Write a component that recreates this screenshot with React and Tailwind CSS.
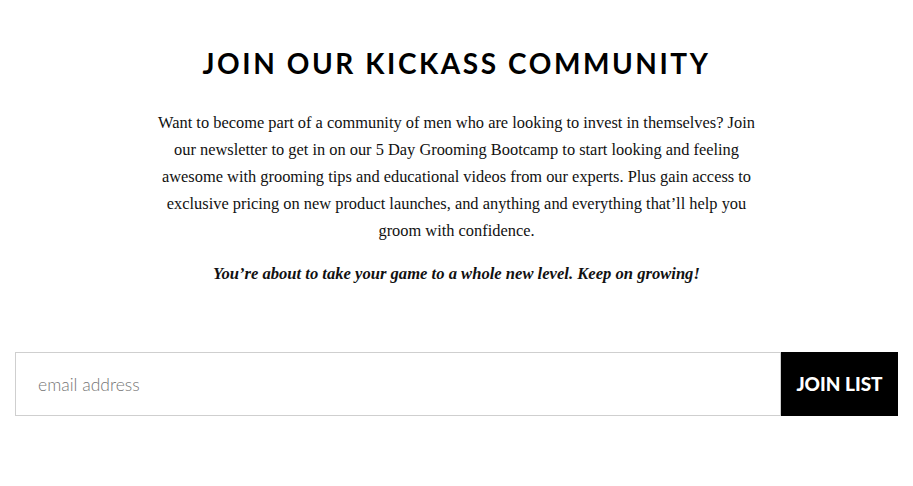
import React from 'react';

export default function App() {
  return (
    <div className="min-h-[486px] w-full bg-white px-[15px] pt-[44px]">
      <h2 className="text-center font-['Lato','Noto_Sans',sans-serif] text-[28px] leading-[38px] font-bold uppercase tracking-[0.092em] text-black">
        Join our kickass community
      </h2>

      <div className="mx-auto mt-[27px] max-w-[640px] text-center font-['Liberation_Serif',serif] text-[16.4px] leading-[27px] text-[#111]">
        <p>
          Want to become part of a community of men who are looking to invest in themselves? Join
          <br />
          our newsletter to get in on our 5 Day Grooming Bootcamp to start looking and feeling
          <br />
          awesome with grooming tips and educational videos from our experts. Plus gain access to
          <br />
          exclusive pricing on new product launches, and anything and everything that’ll help you
          <br />
          groom with confidence.
        </p>
        <p className="mt-[16px] text-[16.6px] font-bold italic">
          You’re about to take your game to a whole new level. Keep on growing!
        </p>
      </div>

      <form className="mt-[65px] flex h-[64px] w-full" onSubmit={(e) => e.preventDefault()}>
        <input
          type="email"
          placeholder="email address"
          className="h-full flex-1 border border-[#cfcfcf] bg-white px-[22px] font-['Lato',sans-serif] text-[17.5px] font-light text-black outline-none placeholder:text-[#767676]"
        />
        <button
          type="submit"
          className="h-full w-[117px] bg-black font-['Lato',sans-serif] text-[19px] font-black uppercase text-white"
        >
          Join list
        </button>
      </form>
    </div>
  );
}
